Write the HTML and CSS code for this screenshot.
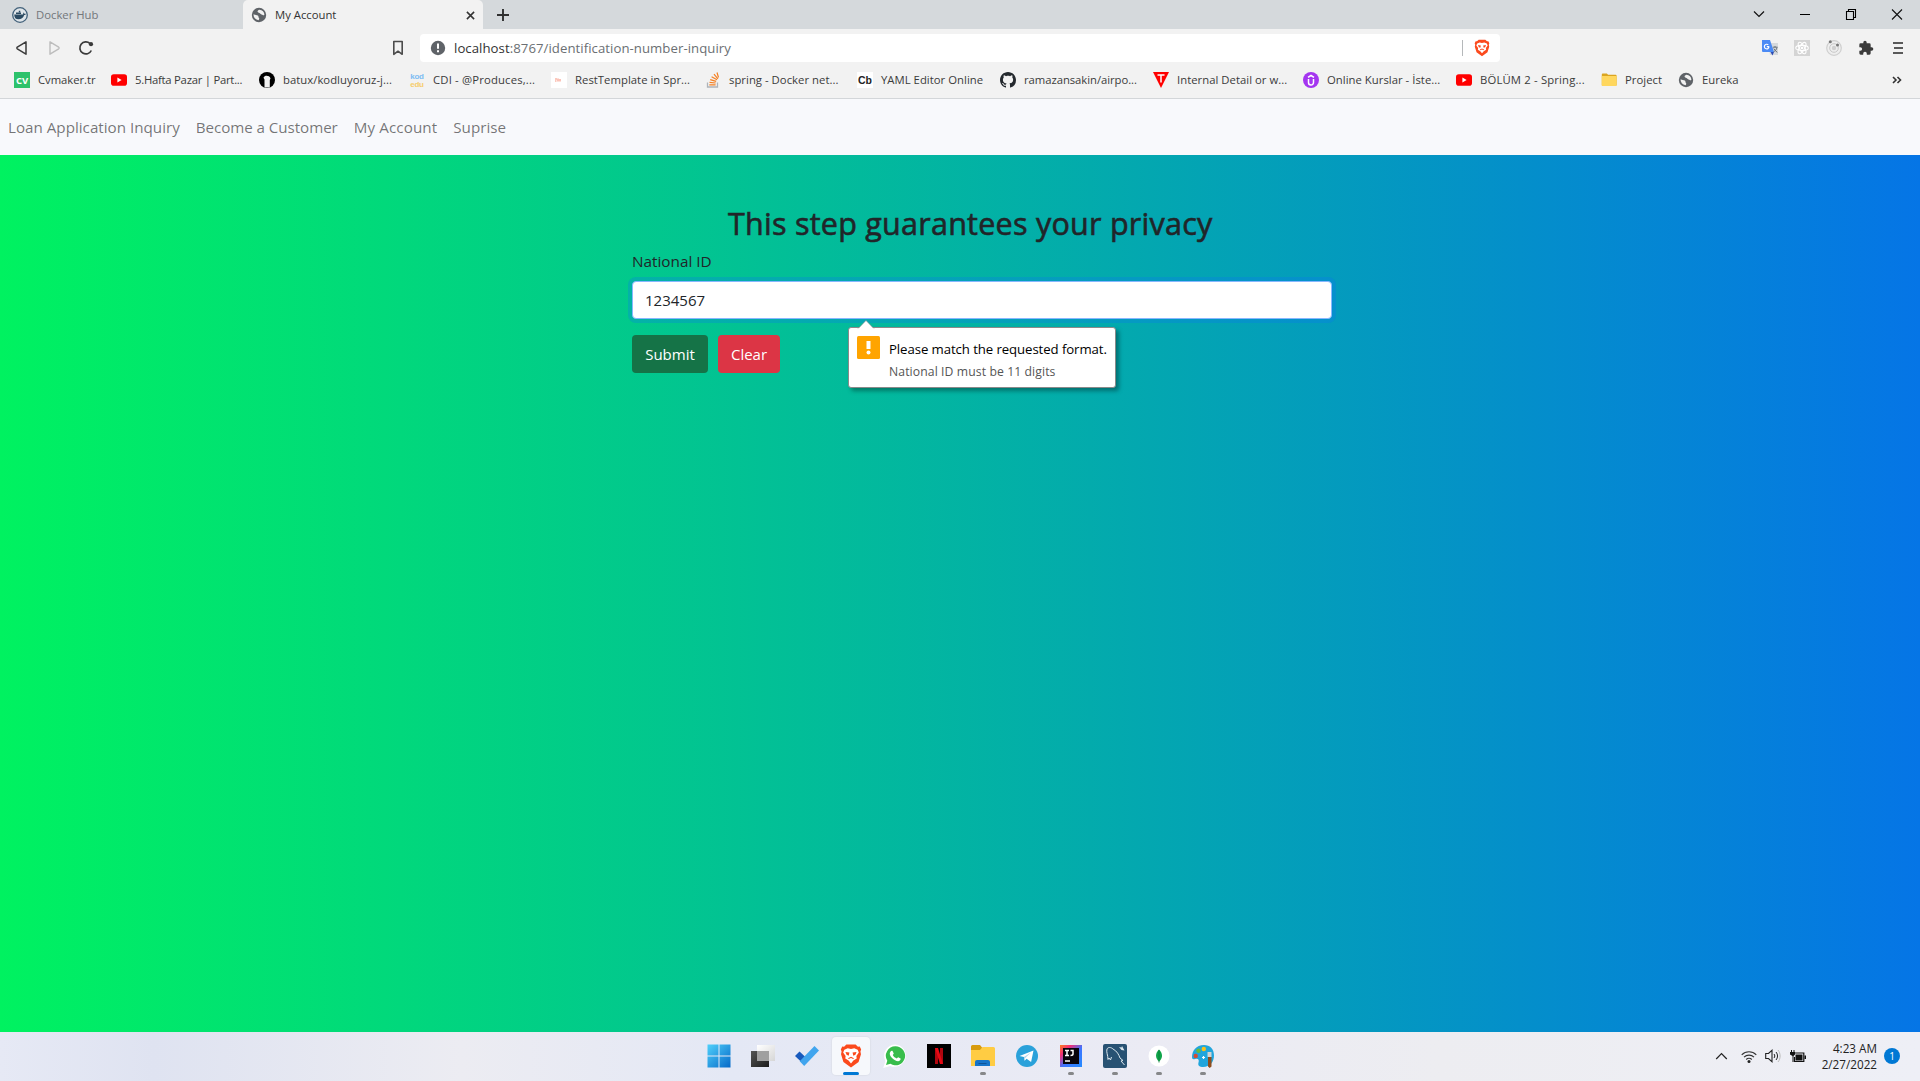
FILE: index.html
```html
<!DOCTYPE html>
<html lang="en">
<head>
<meta charset="utf-8">
<title>My Account</title>
<link rel="stylesheet" href="styles.css">
</head>
<body>
<svg class="defs" aria-hidden="true">
  <symbol id="globe" viewBox="0 0 16 16"><circle cx="8" cy="8" r="7.2" fill="#5f6368"/><path d="M2.6 7.2c1.6.9 3 .6 4.200 1.200 1 .6.4 1.800 1.200 2.500.5.5.1 1.600-.4 2.300A5.400 5.400 0 0 1 2.600 7.200zM8.300 2.700c-1 .5-2 1-1.700 2.100.3 1.100 1.900.8 2.500 1.700.7 1.100 2 .8 3 1.700.5.4.9 0 1.300-.4a5.400 5.400 0 0 0-5.100-5.100z" fill="#f2f2f2"/></symbol>
  <symbol id="youtube" viewBox="0 0 16 16"><rect y="2.300" width="16" height="11.400" rx="2.800" fill="#f00"/><path d="M6.400 5.600v4.800L10.600 8z" fill="#fff"/></symbol>
  <symbol id="brave" viewBox="0 0 24 26"><path d="M7 .5h10l2.500 2.400 2-.2L23 6l-.8 2 .6 3-2.600 8.500L12 25.500 3.800 19.500 1.200 11l.6-3L1 6l1.500-3.300 2 .2z" fill="#fb4a1d"/><path d="M12 5.400l3.500-.7 3.700 1.500 1.300 3-2.700 3.800.4 2.800-3.600 2.200L12 21l-2.600-3-3.600-2.200.4-2.800-2.700-3.800 1.300-3 3.700-1.500z" fill="#fff"/><path d="M6 8.600l4.300.5-.8 3.600-2.300-1zM18 8.600l-4.300.5.8 3.600 2.300-1zM8.800 15.400l3.200-1.600 3.200 1.600-.8.8-2.400-1-2.400 1z" fill="#fb4a1d"/></symbol>
</svg>

<header class="browser">
  <div class="tabs">
    <div class="tab">
      <svg class="i16" viewBox="0 0 16 16"><circle cx="8" cy="8" r="7.300" fill="#dfe5e9" stroke="#42617a" stroke-width="1.300"/><path d="M2.200 7.400h8.600c.6-.1.600-1.300.2-1.900.9.100 1.300.8 1.400 1.300.6-.1 1.200 0 1.500.2-.3.700-1 1-1.700 1-1 2.900-3 4.300-5.700 4.300-2.800 0-4.300-1.700-4.300-4.900zM4 5.500h5V7H4zM6.800 3.800h1.500v1.500H6.800z" fill="#2b4a62"/></svg>
      <span>Docker Hub</span>
    </div>
    <div class="tab active">
      <svg class="i16"><use href="#globe"/></svg>
      <span>My Account</span>
      <svg class="close" viewBox="0 0 10 10"><path d="M1 1l8 8M9 1L1 9" stroke="#333" stroke-width="1.700"/></svg>
    </div>
    <svg class="plus" viewBox="0 0 12 12"><path d="M6 0v12M0 6h12" stroke="#303030" stroke-width="1.900"/></svg>
    <div class="window-buttons">
      <svg viewBox="0 0 12 12"><path d="M1 3.500l5 5 5-5" fill="none" stroke="#111" stroke-width="1.200"/></svg>
      <svg viewBox="0 0 12 12"><path d="M1 6.500h10" stroke="#000"/></svg>
      <svg viewBox="0 0 12 12"><path d="M1.500 3.500h7v8h-7zM3.500 3.500v-2h7v8h-2" fill="none" stroke="#000" stroke-width="1.100"/></svg>
      <svg viewBox="0 0 12 12"><path d="M1 1.500l10 10M11 1.500l-10 10" stroke="#111" stroke-width="1.100"/></svg>
    </div>
  </div>

  <div class="toolbar">
    <div class="nav-buttons">
      <svg viewBox="0 0 16 16"><path d="M12 1.800v12.400L3.300 8.800a1 1 0 0 1 0-1.600z" fill="none" stroke="#3b3b3b" stroke-width="1.500" stroke-linejoin="round"/></svg>
      <svg viewBox="0 0 16 16"><path d="M4 1.800v12.400l8.700-5.400a1 1 0 0 0 0-1.600z" fill="none" stroke="#bdbdbd" stroke-width="1.400" stroke-linejoin="round"/></svg>
      <svg viewBox="0 0 16 16"><path d="M13.300 10.500A6 6 0 1 1 12 3.600" fill="none" stroke="#3b3b3b" stroke-width="1.700"/><circle cx="13" cy="4.200" r="2.100" fill="#3b3b3b"/></svg>
    </div>
    <svg class="save" viewBox="0 0 12 16"><path d="M1.800 1.500h8.400v12.800L6 11.200l-4.200 3.100z" fill="none" stroke="#4c4c4c" stroke-width="1.600" stroke-linejoin="round"/></svg>
    <div class="address">
      <svg class="i16" viewBox="0 0 16 16"><circle cx="8" cy="8" r="7.200" fill="#5f6368"/><path d="M7 3.500h2v5.300H7zM7 10.300h2v2H7z" fill="#fff"/></svg>
      <span class="url"><b>localhost</b>:8767/identification-number-inquiry</span>
      <span class="divider"></span>
      <svg class="shield"><use href="#brave"/></svg>
    </div>
    <div class="extensions">
      <svg viewBox="0 0 16 16"><path d="M6 3h10v12H8z" fill="#d6d9dc"/><path d="M0 0h8l4 12H1a1 1 0 0 1-1-1z" fill="#4c8bf5"/><path d="M8.500 12H12l-1.500 3.500z" fill="#2b4bb5"/><path d="M7 6.600H4.800M7 6.600a2.300 2.300 0 1 1-.7-1.700" fill="none" stroke="#fff" stroke-width="1.200"/><path d="M10.800 7.200h4.700M13 6v1.200M15 7.500c-.5 2-1.800 3.500-3.500 4.500M11.800 8.600c.8 1.500 2 2.700 3.500 3.700" fill="none" stroke="#69727a"/></svg>
      <svg viewBox="0 0 16 16"><path d="M0 0h16v16H0z" fill="#d4d4d4"/><g fill="none" stroke="#fff" stroke-width="1.100"><ellipse cx="8" cy="8" rx="6.300" ry="2.600"/><ellipse cx="8" cy="8" rx="6.300" ry="2.600" transform="rotate(60 8 8)"/><ellipse cx="8" cy="8" rx="6.300" ry="2.600" transform="rotate(120 8 8)"/></g><circle cx="8" cy="8" r="1.300" fill="#fff"/></svg>
      <svg viewBox="0 0 16 16"><circle cx="8" cy="8" r="7.300" fill="#eee" stroke="#cfcfcf" stroke-width="1.200"/><circle cx="8" cy="8" r="4.300" fill="none" stroke="#c8c8c8"/><circle cx="8" cy="8" r="2.200" fill="#cfcfcf"/><circle cx="4.300" cy="1.800" r="1.500" fill="#777"/><circle cx="11.500" cy="5" r="1.500" fill="#777"/></svg>
      <svg viewBox="0 0 24 24"><path d="M20.500 11H19V7a2 2 0 0 0-2-2h-4V3.500a2.500 2.500 0 0 0-5 0V5H4a2 2 0 0 0-2 2v3.800h1.500a2.700 2.700 0 0 1 0 5.400H2V20a2 2 0 0 0 2 2h3.800v-1.500a2.700 2.700 0 0 1 5.400 0V22H17a2 2 0 0 0 2-2v-4h1.500a2.500 2.500 0 0 0 0-5z" fill="#3b3b3b"/></svg>
      <svg viewBox="0 0 16 16"><path d="M3 3h10M4 8h9M3 13h10" stroke="#5a5a5a" stroke-width="1.800"/></svg>
    </div>
  </div>

  <nav class="bookmarks">
    <a><svg viewBox="0 0 16 16"><path d="M0 0h16v16H0z" fill="#2dc26b"/><text x="8" y="11.500" class="mark-cv">CV</text></svg>Cvmaker.tr</a>
    <a><svg><use href="#youtube"/></svg>5.Hafta Pazar | Part...</a>
    <a><svg viewBox="0 0 16 16"><circle cx="8" cy="8" r="8" fill="#000"/><path d="M5.500 15.500V7.500L4.500 5.800C5.500 4 7 3.500 8.500 4c1.500-.3 2.500.8 3 2.500L10.800 8v7.500z" fill="#f2f2f2"/></svg>batux/kodluyoruz-j...</a>
    <a><svg viewBox="0 0 16 16"><text x="8" y="7.200" class="mark-kod">kod</text><text x="8" y="14.700" class="mark-edu">edu</text></svg>CDI - @Produces,...</a>
    <a><svg viewBox="0 0 16 16"><path d="M0 0h16v16H0z" fill="#fff"/><path d="M4 7h2M4 9h1.500M7 6.500v3M9 7v2.500" stroke="#f8937e" stroke-width="1.100"/></svg>RestTemplate in Spr...</a>
    <a><svg viewBox="0 0 16 16"><path d="M2.500 10.500V15h10v-4.500" fill="none" stroke="#aeb3b8" stroke-width="1.300"/><path d="M4.300 12.800h6.300M4.500 10.300l6.200.7M5.200 7.600l6 1.700M6.600 4.800l5.400 3M9 2.200l3.900 4.700M12 .5l1.500 5" stroke="#f48024" stroke-width="1.200"/></svg>spring - Docker net...</a>
    <a><svg viewBox="0 0 16 16"><path d="M0 0h16v16H0z" fill="#fff"/><text x="8" y="11.500" class="mark-cb">Cb</text></svg>YAML Editor Online</a>
    <a><svg viewBox="0 0 16 16"><path d="M8 0C3.580 0 0 3.580 0 8c0 3.540 2.290 6.530 5.470 7.590.4.070.55-.17.55-.38 0-.19-.01-.82-.01-1.490-2.010.37-2.530-.49-2.690-.94-.09-.23-.48-.94-.82-1.130-.28-.15-.68-.52-.01-.53.63-.01 1.080.58 1.230.82.72 1.210 1.870.87 2.330.66.070-.52.28-.87.51-1.070-1.780-.2-3.640-.89-3.640-3.950 0-.87.31-1.590.82-2.150-.08-.2-.36-1.020.08-2.120 0 0 .67-.21 2.200.82.64-.18 1.320-.27 2-.27s1.360.09 2 .27c1.530-1.040 2.200-.82 2.200-.82.44 1.100.16 1.920.08 2.120.51.56.82 1.270.82 2.150 0 3.070-1.870 3.750-3.650 3.950.29.25.54.73.54 1.480 0 1.070-.01 1.930-.01 2.200 0 .21.15.46.55.38A8 8 0 0 0 16 8c0-4.420-3.580-8-8-8z" fill="#24292e"/></svg>ramazansakin/airpo...</a>
    <a><svg viewBox="0 0 16 16"><path d="M0 0h16L8 16z" fill="#f00"/><path d="M4.500 3h7M8 3v7.500" stroke="#fff" stroke-width="1.500"/></svg>Internal Detail or w...</a>
    <a><svg viewBox="0 0 16 16"><circle cx="8" cy="8" r="8" fill="#a435f0"/><path d="M5 5.400L8 3.500l3 1.900M5.500 7v3.500a2.500 2.500 0 0 0 5 0V7" fill="none" stroke="#fff" stroke-width="1.500"/></svg>Online Kurslar - İste...</a>
    <a><svg><use href="#youtube"/></svg>BÖLÜM 2 - Spring...</a>
    <a><svg viewBox="0 0 16 16"><path d="M.8 2.500a1 1 0 0 1 1-1h4l1.300 1.300h7.500a1 1 0 0 1 1 1v9.700H.8z" fill="#dba520"/><path d="M.8 4h14.800v9a1 1 0 0 1-1 1H1.800a1 1 0 0 1-1-1z" fill="#ffd75e"/></svg>Project</a>
    <a><svg><use href="#globe"/></svg>Eureka</a>
    <svg class="more" viewBox="0 0 10 8"><path d="M1 1l3 3-3 3M5.500 1l3 3-3 3" fill="none" stroke="#333" stroke-width="1.600"/></svg>
  </nav>
</header>

<nav class="navbar">
  <a>Loan Application Inquiry</a>
  <a>Become a Customer</a>
  <a>My Account</a>
  <a>Suprise</a>
</nav>

<main class="page">
  <form class="inquiry">
    <h2>This step guarantees your privacy</h2>
    <label for="nid">National ID</label>
    <div class="field">
      <input id="nid" type="text" value="1234567">
      <div class="validation">
        <svg class="pointer" viewBox="0 0 18 9"><path d="M1 9l8-8.500L17 9z" fill="#fff"/><path d="M1 8.500l8-8 8 8" fill="none" stroke="#8a8a8a" stroke-width=".6"/></svg>
        <svg class="warn" viewBox="0 0 23 23"><rect width="23" height="23" rx="1.500" fill="#ffa400"/><path d="M9.500 5h4v8h-4z" fill="#fff"/><circle cx="11.500" cy="16.500" r="2" fill="#fff"/></svg>
        <p class="message">Please match the requested format.</p>
        <p class="hint">National ID must be 11 digits</p>
      </div>
    </div>
    <div class="actions">
      <button type="button" class="btn submit">Submit</button>
      <button type="button" class="btn clear">Clear</button>
    </div>
  </form>
</main>

<footer class="taskbar">
  <div class="apps">
    <div class="app"><svg viewBox="0 0 24 24"><defs><linearGradient id="win" x2="1" y2="1"><stop stop-color="#4fd0fb"/><stop offset="1" stop-color="#0669c8"/></linearGradient></defs><path d="M.5.500H11.500V11.500H.500zM12.500.500h11v11h-11zM.500 12.500h11v11H.500zM12.500 12.500h11v11h-11z" fill="url(#win)"/></svg></div>
    <div class="app"><svg viewBox="0 0 24 24"><defs><linearGradient id="back" x2="1" y2="1"><stop stop-color="#555"/><stop offset="1" stop-color="#1c1c1c"/></linearGradient><linearGradient id="front" x2="1" y2="1"><stop stop-color="#fff"/><stop offset="1" stop-color="#d6d6d6"/></linearGradient></defs><path d="M0 7h18v16H0z" fill="url(#back)"/><path d="M6 1h18v16H6z" fill="url(#front)"/><path d="M6 7h12v10H6z" fill="#a0a0a0"/></svg></div>
    <div class="app"><svg viewBox="0 0 24 24"><path d="M0 12l4.500-4.500 7.500 7-3 6z" fill="#185abd"/><path d="M19.500 2L24 6.500 9.200 22 4.700 17.300z" fill="#41a5ee"/></svg></div>
    <div class="app current"><svg viewBox="0 0 24 26"><use href="#brave"/></svg></div>
    <div class="app"><svg viewBox="0 0 24 24"><path d="M12.300.5A11.200 11.200 0 0 0 2.400 17L.2 24l7-2A11.200 11.200 0 1 0 12.300.500z" fill="#fff"/><path d="M12.400 2.300A9.500 9.500 0 0 0 4.300 16.800L3 21l4.500-1.200A9.500 9.500 0 1 0 12.400 2.300z" fill="#38bd4c"/><path d="M9 6.700c.5 0 .7.200 1.700 2.800.1.500-.8 1.300-.9 1.600.9 1.800 2.300 2.800 3.900 3.400.4 0 1-1.400 1.500-1.300l2.300 1.200c.4.300 0 1.400-.7 2.100-1 1-2.700.8-4.800-.2-2.600-1.300-4.800-3.900-5.200-6-.3-1.800 1-3.700 2.200-3.600z" fill="#fff"/></svg></div>
    <div class="app"><svg viewBox="0 0 24 24"><path d="M0 0h24v24H0z" fill="#000"/><path d="M8 4h3v16H8zM13 4h3v16h-3z" fill="#b1060f"/><path d="M8 4h3l5 16h-3z" fill="#e50914"/></svg></div>
    <div class="app open"><svg viewBox="0 0 24 24"><path d="M0 2.500A1.500 1.500 0 0 1 1.500 1H9l2 2.500V8H0z" fill="#d89b0d"/><path d="M0 6h9l2.500-3H22.500A1.500 1.500 0 0 1 24 4.500V22H0z" fill="#ffcc43"/><path d="M4 22v-4a2 2 0 0 1 2-2h11a2 2 0 0 1 2 2v4z" fill="#1674c9"/><path d="M7.500 19.500h8" stroke="#0e5397"/></svg></div>
    <div class="app"><svg viewBox="0 0 24 24"><circle cx="12" cy="12" r="11" fill="#2aa1da"/><path d="M4.500 12L18.500 6.500 16.100 18l-4.500-3.200-2 2-.7-3.700z" fill="#fff"/><path d="M8.900 13.100l7-4.500-5.700 5.300-.6 2.900z" fill="#b5d5ea"/></svg></div>
    <div class="app open"><svg viewBox="0 0 24 24"><defs><linearGradient id="ij" x2="1" y2="1"><stop stop-color="#fc801d"/><stop offset=".25" stop-color="#f52d75"/><stop offset=".55" stop-color="#3e75ff"/><stop offset="1" stop-color="#248bff"/></linearGradient></defs><path d="M1 1h22v22H1z" fill="url(#ij)"/><path d="M4 4h16v16H4z" fill="#08040c"/><path d="M6 6.500h4M8 6.500v5M6 11.500h4M11.500 6.500H14v3.500q0 1.500-2.500 1.500M6 17h5" fill="none" stroke="#fff" stroke-width="1.500"/></svg></div>
    <div class="app open"><svg viewBox="0 0 24 24"><rect width="24" height="24" rx="2" fill="#285273"/><path d="M8.500 13l-1 3-1.500-2-1 1.500C5 11 3 8 4 5c1-2 4-2 6 0 4 2 6 6 7 9l3 2.500-2 .5 3.500 4" fill="none" stroke="#dbe7ee"/><path d="M16 3l2.500.5L19 2l2.500 4.500-3-.5z" fill="#dbe7ee"/></svg></div>
    <div class="app open"><svg viewBox="0 0 24 24"><circle cx="12" cy="12" r="10.500" fill="#fff"/><path d="M12 5.500c4 4 4 8.500 0 12-4-3.500-4-8 0-12z" fill="#10a54a"/><path d="M12 6v12.500" stroke="#087b36" stroke-width=".8"/></svg></div>
    <div class="app open"><svg viewBox="0 0 24 24"><path d="M13 1C5 1 1 7 1 13c0 2 1 2.500 3 2 3-.8 4.500.5 3.500 3.500C6.500 22 9 23 12 23c7 0 11-5 11-11.500C23 5 19 1 13 1z" fill="#21a5dc"/><circle cx="7.500" cy="6.800" r="2.200" fill="#67b83b"/><circle cx="12.800" cy="5" r="2.200" fill="#f8c21c"/><circle cx="4.700" cy="12" r="2.200" fill="#d34d33"/><path d="M11 13.500h3M12.500 12v3" stroke="#fff" stroke-width="1.200"/><path d="M16.500 8h4v5h-4z" fill="#d3d3d3"/><path d="M17 13h3.500v9.500l-1.800 1.500-1.700-1.500z" fill="#8f4d1d"/></svg></div>
  </div>
  <div class="tray">
    <svg class="chevron" viewBox="0 0 12 8"><path d="M.7 7L6 1.500 11.300 7" fill="none" stroke="#222" stroke-width="1.200"/></svg>
    <svg class="wifi" viewBox="0 0 16 13"><path d="M.7 4.800a10.400 10.400 0 0 1 14.600 0M3 7.200a7 7 0 0 1 10 0M5.200 9.500a4 4 0 0 1 5.600 0" fill="none" stroke="#333" stroke-width="1.100"/><circle cx="8" cy="11.400" r="1.500" fill="#222"/></svg>
    <svg class="sound" viewBox="0 0 16 14"><path d="M.7 4.500h2.800L7 1.300v11.400L3.500 9.500H.7z" fill="none" stroke="#222" stroke-width="1.100"/><path d="M9 5c1 1.200 1 2.800 0 4M11 3c2 2.500 2 5.500 0 8" fill="none" stroke="#222"/><path d="M13 1c2.800 3.500 2.800 8.500 0 12" fill="none" stroke="#bbb"/></svg>
    <svg class="battery" viewBox="0 0 17 13"><path d="M4.500 3h9.300v8.500H4.500V7" fill="none" stroke="#111" stroke-width="1.200"/><path d="M5.500 4.500h7v6h-7zM14.500 5.500h1.500v3.500h-1.500zM0 2h5v2.500L3.500 6v6h-1V6L0 4.500zM1 0h1v3H1zM3.500 0h1v3h-1z" fill="#111"/></svg>
    <div class="clock"><span>4:23 AM</span><span>2/27/2022</span></div>
    <span class="count">1</span>
  </div>
</footer>
</body>
</html>
```
FILE: styles.css
```css
* { box-sizing: border-box; }

body {
  margin: 0;
  height: 1081px;
  display: flex;
  flex-direction: column;
  overflow: hidden;
  font-family: "Open Sans", "Noto Sans", sans-serif;
  font-size: 15px;
  line-height: 1.5;
  color: #212529;
}

svg { display: block; flex: none; }
.defs { width: 0; height: 0; position: absolute; }
.i16 { width: 16px; height: 16px; }

/* browser frame */
.browser {
  flex: none;
  height: 99px;
  background: #f2f2f2;
  border-bottom: 1px solid #d3d6d9;
  font-size: 11.300px;
  color: #3b3b3b;
}
.tabs { display: flex; align-items: center; height: 29px; background: #d5d9dc; }
.tab {
  display: flex;
  align-items: center;
  gap: 8px;
  width: 243px;
  height: 29px;
  padding: 1px 8px 0 12px;
  color: #73777b;
}
.tab.active { width: 240px; padding-left: 8px; background: #f2f2f2; color: #333; border-radius: 5px 5px 0 0; }
.close { width: 9px; height: 9px; margin-left: auto; }
.plus { width: 12px; height: 12px; margin: 1px 0 0 14px; }
.window-buttons { display: flex; gap: 34px; margin: -1px 17px 0 auto; }
.window-buttons svg { width: 12px; height: 12px; }

.toolbar { display: flex; align-items: center; height: 37px; padding-top: 1px; }
.nav-buttons { display: flex; gap: 16px; margin-left: 14px; }
.nav-buttons svg { width: 16px; height: 16px; }
.save { width: 12px; height: 16px; margin-left: 298px; }
.address {
  display: flex;
  align-items: center;
  width: 1080px;
  height: 28px;
  margin: 0 0 0 16px;
  padding: 0 10px;
  background: #fff;
  border-radius: 4px;
}
.url { margin-left: 8px; padding-top: 1px; font-size: 13.200px; letter-spacing: .05px; color: #6b6f73; }
.url b { font-weight: 400; color: #333; }
.divider { width: 1px; height: 16px; margin: 0 11px 0 auto; background: #b5b8ba; }
.shield { width: 16px; height: 18px; }
.extensions { display: flex; gap: 16px; margin: 0 14px 0 auto; }
.extensions svg { width: 16px; height: 16px; }

.bookmarks {
  display: grid;
  grid-template-columns: 97px 148px 150px 142px 154px 152px 143px 153px 150px 153px 145px 77px 1fr 10px;
  align-items: center;
  height: 28px;
  padding: 0 18px 0 14px;
}
.bookmarks a { display: flex; align-items: center; gap: 8px; white-space: nowrap; letter-spacing: .03px; }
.bookmarks a:nth-child(1), .bookmarks a:nth-child(8) { letter-spacing: -.05px; }
.bookmarks a:nth-child(2) { letter-spacing: -.25px; }
.bookmarks a:nth-child(4), .bookmarks a:nth-child(11) { letter-spacing: .16px; }
.bookmarks a svg { width: 16px; height: 16px; overflow: visible; }
.bookmarks .more { width: 10px; height: 8px; }
.bookmarks text { text-anchor: middle; font-weight: 700; letter-spacing: 0; }
.mark-cv { font-size: 9.500px; fill: #fff; }
.bookmarks .mark-kod, .bookmarks .mark-edu { font-family: "Liberation Sans", sans-serif; font-size: 8px; letter-spacing: -.3px; }
.mark-kod { fill: #7cbcf2; }
.mark-edu { fill: #f6cd6c; }
.mark-cb { font-family: "Liberation Sans", sans-serif; font-size: 10.500px; fill: #222; }

/* site navigation */
.navbar {
  flex: none;
  display: flex;
  align-items: center;
  gap: 16px;
  height: 56px;
  padding: 0 8px;
  background: #f8f9fc;
  color: rgba(0, 0, 0, .55);
  font-size: 15.200px;
}
.navbar a:nth-child(2) { letter-spacing: -.07px; }
.navbar a:nth-child(3) { letter-spacing: .1px; }

/* form */
.page { flex: 1; background: linear-gradient(to right, #00f260, #0575e6); }
.inquiry { width: 700px; margin: 0 0 0 632px; padding-top: 49px; }
h2 {
  margin: 0 0 8px 96px;
  font-size: 30.500px;
  font-weight: 500;
  line-height: 38px;
  letter-spacing: .25px;
  white-space: nowrap;
  -webkit-text-stroke: .6px #212529;
}
.inquiry label { display: block; height: 24px; margin-bottom: 7px; line-height: 22px; font-size: 15.300px; }
.field { position: relative; }
#nid {
  display: block;
  width: 700px;
  height: 38px;
  padding: 0 12px;
  border: 1px solid #86b7fe;
  border-radius: 4px;
  outline: 0;
  box-shadow: 0 0 0 4px rgba(13, 110, 253, .25);
  font: inherit;
  color: #212529;
}
.validation {
  position: absolute;
  left: 216px;
  top: 46px;
  width: 268px;
  height: 61px;
  padding: 10px 0 0 40px;
  background: #fff;
  border: 1px solid #8a8a8a;
  border-radius: 3px;
  box-shadow: 3px 3px 4px rgba(0, 0, 0, .35);
  white-space: nowrap;
}
.pointer { position: absolute; left: 8px; top: -8px; width: 18px; height: 9px; }
.warn { position: absolute; left: 8px; top: 8px; width: 23px; height: 23px; }
.message { margin: 0; font-size: 13.200px; line-height: 22px; letter-spacing: -.08px; color: #000; }
.hint { margin: 0; font-size: 12.200px; line-height: 23px; letter-spacing: .1px; color: #555; }
.actions { display: flex; gap: 10px; margin-top: 16px; }
.btn { height: 38px; padding: 0; border: 0; border-radius: 4px; font: inherit; color: #fff; }
.submit { width: 76px; background: #157347; }
.clear { width: 62px; background: #dc3545; }

/* taskbar */
.taskbar {
  flex: none;
  display: grid;
  grid-template-columns: 1fr auto 1fr;
  height: 49px;
  padding-right: 20px;
  background: linear-gradient(to right, #e6e9f5, #dfe3f1 8%, #ececf2 24%, #e4e8f5 38%, #ebebf4 60%, #ededf1 75%, #eeeff6);
}
.apps { grid-column: 2; display: flex; align-items: flex-start; padding: 5px 0 0 21px; }
.app { position: relative; display: flex; align-items: center; justify-content: center; width: 38px; height: 38px; margin: 0 3px; }
.app svg { width: 24px; height: 24px; }
.app.current { background: #f6f8fc; border-radius: 4px; box-shadow: 0 0 1px 1px #dee1eb; }
.app.open::after, .app.current::after {
  content: "";
  position: absolute;
  bottom: 0;
  left: 16px;
  width: 6px;
  height: 3px;
  border-radius: 2px;
  background: #868789;
}
.app.current::after { left: 11px; width: 16px; background: #0078d4; }
.tray { display: flex; align-items: center; justify-content: flex-end; padding-bottom: 1px; }
.chevron { width: 13px; height: 8px; margin-right: 13px; }
.wifi { width: 16px; height: 13px; margin-right: 8px; }
.sound { width: 16px; height: 14px; margin-right: 9px; }
.battery { width: 17px; height: 13px; margin-right: 14px; }
.clock { display: flex; flex-direction: column; align-items: flex-end; width: 56px; font-size: 11.700px; line-height: 16px; color: #222; }
.count { width: 16px; height: 16px; margin-left: 7px; border-radius: 50%; background: #0078d4; color: #fff; font-size: 10px; line-height: 16px; text-align: center; }
```
